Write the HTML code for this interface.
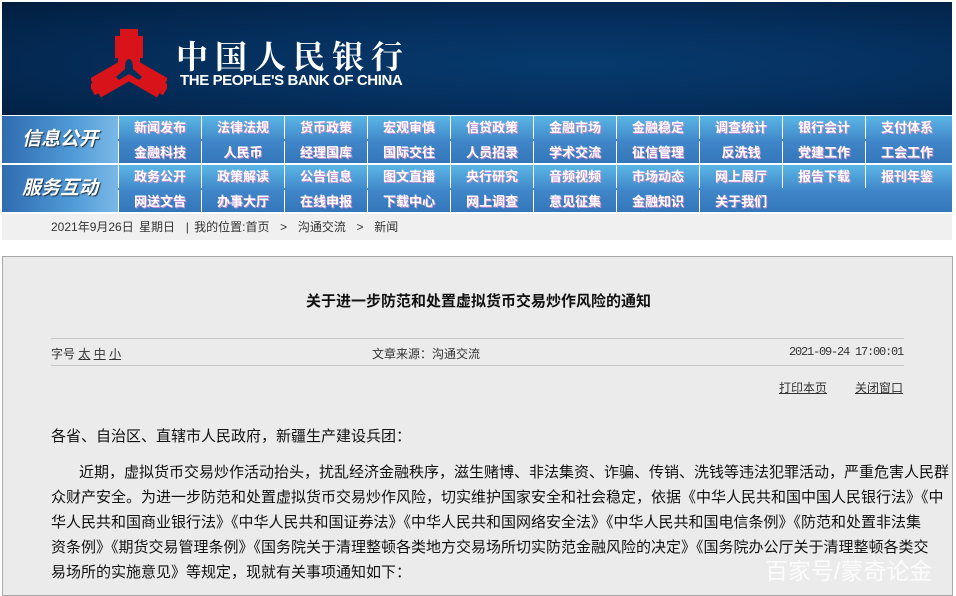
<!DOCTYPE html>
<html><head><meta charset="utf-8"><style>
*{margin:0;padding:0;box-sizing:border-box}
body{width:956px;height:593px;background:#fff;font-family:"Liberation Sans","Noto Sans CJK SC",sans-serif;position:relative;overflow:hidden}
.hdr{position:absolute;left:2px;top:2px;width:950px;height:113px;background:radial-gradient(ellipse at 60% 55%,#073a6e 0%,#05305e 45%,#03254c 80%,#021d3d 100%)}
.cn{position:absolute;left:174px;top:30px;color:#fff;font-size:32px;font-weight:bold;letter-spacing:7px;font-family:"Noto Serif CJK SC","Noto Sans CJK SC",serif}
.en{position:absolute;left:178px;top:70px;color:#fff;font-size:15px;font-weight:bold;letter-spacing:-0.4px}
.nav{position:absolute;left:2px;width:950px;height:47px;background:linear-gradient(#5bb6e6,#3f86c8 55%,#3476bb)}
.lab{position:absolute;left:0;top:0;width:116px;height:47px;background:linear-gradient(90deg,#2f6bb0,#4f9ad6 60%,#7ab8e6);color:#fff;font-size:19px;font-style:italic;font-weight:bold;text-align:center;line-height:47px;text-shadow:1px 1px 1px #234}
.it{position:absolute;width:83px;height:23px;color:#fff;font-size:13px;font-weight:bold;text-align:center;line-height:23px;text-shadow:1px 1px 0 #c58cd0;border-left:1px solid #fff}
.bc{position:absolute;left:2px;top:214px;width:950px;height:26px;background:#f0f0f0;font-size:12px;color:#333;line-height:26px;padding-left:49px;word-spacing:2px}
.box{position:absolute;left:2px;top:256px;width:951px;height:340px;background:#ebebeb;border:1px solid #a8a8a8}
.t{position:absolute;left:0;width:951px;top:33px;text-align:center;font-size:15px;font-weight:bold;color:#111}
.ln{position:absolute;left:48px;width:853px;height:1px;background:#c8c8c8}
.m{position:absolute;font-size:12px;color:#333}
.p{position:absolute;left:48px;width:853px;font-size:15px;color:#111}
.p div{height:25px;line-height:25px;text-align:justify;text-align-last:justify;white-space:nowrap}
.wm{position:absolute;left:765px;top:552px;color:#fff;font-size:23px;opacity:.85}
</style></head><body>
<div class="hdr">
<svg style="position:absolute;left:89px;top:25px" width="76" height="70" viewBox="0 0 76 70">
<g fill="#d8131a">
<rect x="29" y="2" width="18" height="7"/>
<rect x="24" y="9" width="28" height="22"/>
<rect x="27" y="31" width="22" height="10"/>
<g transform="translate(20,52) rotate(-30)"><rect x="-18" y="-11" width="36" height="22"/><rect x="-22" y="-6" width="6" height="12"/></g>
<g transform="translate(56,52) rotate(30)"><rect x="-18" y="-11" width="36" height="22"/><rect x="16" y="-6" width="6" height="12"/></g>
</g>
<path d="M38 32c-3 0-4 5-4 10l-9 8 3 3 10-6 10 6 3-3-9-8c0-5-1-10-4-10z" fill="#05305e"/>
</svg>
<div class="cn">中国人民银行</div>
<div class="en">THE PEOPLE'S BANK OF CHINA</div>
</div>

<div class="nav" style="top:116px"><div class="lab">信息公开</div>
<div class="it" style="left:116px;top:0">新闻发布</div><div class="it" style="left:199px;top:0">法律法规</div><div class="it" style="left:282px;top:0">货币政策</div><div class="it" style="left:365px;top:0">宏观审慎</div><div class="it" style="left:448px;top:0">信贷政策</div><div class="it" style="left:531px;top:0">金融市场</div><div class="it" style="left:614px;top:0">金融稳定</div><div class="it" style="left:697px;top:0">调查统计</div><div class="it" style="left:780px;top:0">银行会计</div><div class="it" style="left:863px;top:0">支付体系</div>
<div class="it" style="left:116px;top:25px">金融科技</div><div class="it" style="left:199px;top:25px">人民币</div><div class="it" style="left:282px;top:25px">经理国库</div><div class="it" style="left:365px;top:25px">国际交往</div><div class="it" style="left:448px;top:25px">人员招录</div><div class="it" style="left:531px;top:25px">学术交流</div><div class="it" style="left:614px;top:25px">征信管理</div><div class="it" style="left:697px;top:25px">反洗钱</div><div class="it" style="left:780px;top:25px">党建工作</div><div class="it" style="left:863px;top:25px">工会工作</div>
</div>
<div class="nav" style="top:165px"><div class="lab">服务互动</div>
<div class="it" style="left:116px;top:0">政务公开</div><div class="it" style="left:199px;top:0">政策解读</div><div class="it" style="left:282px;top:0">公告信息</div><div class="it" style="left:365px;top:0">图文直播</div><div class="it" style="left:448px;top:0">央行研究</div><div class="it" style="left:531px;top:0">音频视频</div><div class="it" style="left:614px;top:0">市场动态</div><div class="it" style="left:697px;top:0">网上展厅</div><div class="it" style="left:780px;top:0">报告下载</div><div class="it" style="left:863px;top:0">报刊年鉴</div>
<div class="it" style="left:116px;top:25px">网送文告</div><div class="it" style="left:199px;top:25px">办事大厅</div><div class="it" style="left:282px;top:25px">在线申报</div><div class="it" style="left:365px;top:25px">下载中心</div><div class="it" style="left:448px;top:25px">网上调查</div><div class="it" style="left:531px;top:25px">意见征集</div><div class="it" style="left:614px;top:25px">金融知识</div><div class="it" style="left:697px;top:25px">关于我们</div>
</div>

<div class="bc">2021年9月26日 星期日 &nbsp;| 我的位置:首页 &nbsp;&gt;&nbsp; 沟通交流 &nbsp;&gt;&nbsp; 新闻</div>

<div class="box">
<div class="t">关于进一步防范和处置虚拟货币交易炒作风险的通知</div>
<div class="ln" style="top:81px"></div>
<div class="m" style="left:48px;top:88px">字号 <u>太</u> <u>中</u> <u>小</u></div>
<div class="m" style="left:369px;top:88px">文章来源：沟通交流</div>
<div class="m" style="left:786px;top:88px;font-family:'Liberation Mono',monospace;font-size:12px;letter-spacing:-1.2px">2021-09-24 17:00:01</div>
<div class="ln" style="top:108px"></div>
<div class="m" style="left:776px;top:122px"><u>打印本页</u></div>
<div class="m" style="left:852px;top:122px"><u>关闭窗口</u></div>
<div class="p" style="top:167px"><div style="text-align-last:left">各省、自治区、直辖市人民政府，新疆生产建设兵团：</div></div>
<div class="p" style="top:203px">
<div style="padding-left:28px">近期，虚拟货币交易炒作活动抬头，扰乱经济金融秩序，滋生赌博、非法集资、诈骗、传销、洗钱等违法犯罪活动，严重危害人民群</div>
<div>众财产安全。为进一步防范和处置虚拟货币交易炒作风险，切实维护国家安全和社会稳定，依据《中华人民共和国中国人民银行法》《中</div>
<div>华人民共和国商业银行法》《中华人民共和国证券法》《中华人民共和国网络安全法》《中华人民共和国电信条例》《防范和处置非法集</div>
<div>资条例》《期货交易管理条例》《国务院关于清理整顿各类地方交易场所切实防范金融风险的决定》《国务院办公厅关于清理整顿各类交</div>
<div style="text-align-last:left">易场所的实施意见》等规定，现就有关事项通知如下：</div>
</div>
</div>
<div class="wm">百家号/蒙奇论金</div>
</body></html>
